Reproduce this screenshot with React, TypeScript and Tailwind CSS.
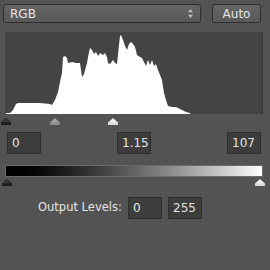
const histogram: [number, number][] = [
  [6, 113], [10, 113], [13, 110], [16, 104], [18, 103], [30, 103], [40, 103], [50, 104],
  [52, 105], [55, 100], [58, 92], [60, 82], [62, 73], [63, 57], [65, 56], [67, 58],
  [68, 63], [72, 62], [76, 63], [80, 63], [82, 77], [84, 74], [87, 63], [89, 52],
  [90, 48], [92, 50], [94, 54], [96, 52], [98, 56], [100, 53], [103, 55], [105, 53],
  [107, 57], [108, 63], [110, 64], [113, 60], [115, 63], [117, 64], [119, 45], [120, 36],
  [121, 35], [123, 40], [125, 46], [127, 50], [129, 44], [131, 42], [133, 44], [135, 47],
  [137, 55], [140, 57], [142, 58], [144, 62], [146, 66], [148, 60], [150, 65], [152, 60],
  [154, 66], [156, 64], [158, 70], [160, 75], [162, 80], [164, 93], [166, 100], [168, 106],
  [172, 107], [176, 107], [178, 108], [182, 110], [186, 112], [190, 113],
]

// page coords -> local coords of the histogram box (starts at 5,32)
const points = [...histogram, [190, 114], [6, 114]]
  .map(([x, y]) => `${x - 5},${y - 32}`)
  .join(' ')

function Handle({ tone }: { tone: 'black' | 'gray' | 'white' }) {
  const fill = tone === 'black' ? '#1c1c1c' : tone === 'gray' ? '#8c8c8c' : '#dcdcdc'
  const top = tone === 'black' ? '#3a3a3a' : tone === 'gray' ? '#a6a6a6' : '#f2f2f2'
  return (
    <svg width="10" height="7" viewBox="0 0 10 7" className="block">
      <polygon points="5,0 10,4.5 10,7 0,7 0,4.5" fill={fill} />
      <polygon points="5,0.8 9,4.3 1,4.3" fill={top} />
    </svg>
  )
}

function Field({ value, className = '' }: { value: string; className?: string }) {
  return (
    <div
      className={`w-[34px] h-[22px] bg-[#3d3d3d] border border-[#2f2f2f] flex items-center pl-[4px] text-[12px] text-[#e4e4e4] ${className}`}
    >
      {value}
    </div>
  )
}

export default function App() {
  return (
    <div
      className="w-[270px] h-[270px] bg-[#535353] overflow-hidden text-[#e4e4e4]"
      style={{ fontFamily: '"DejaVu Sans", "Open Sans", sans-serif' }}
    >
      <div className="flex items-center pt-[4px] pl-[3px] pr-[9px]">
        <div className="w-[198px] h-[19px] rounded-[3px] border border-[#2e2e2e] bg-gradient-to-b from-[#646464] to-[#585858] flex items-center justify-between pl-[6px] pr-[7px]">
          <span className="text-[12px] leading-none">RGB</span>
          <svg width="5" height="9" viewBox="0 0 5 9">
            <polygon points="2.5,0 5,3.2 0,3.2" fill="#bdbdbd" />
            <polygon points="0,5.8 5,5.8 2.5,9" fill="#bdbdbd" />
          </svg>
        </div>
        <div className="ml-auto w-[49px] h-[19px] rounded-[3px] border border-[#2e2e2e] bg-gradient-to-b from-[#656565] to-[#595959] flex items-center justify-center text-[12px] leading-none">
          Auto
        </div>
      </div>

      <div className="mt-[9px] ml-[5px] w-[258px] h-[82px] bg-[#444444] border-r-2 border-[#3c3c3c]">
        <svg width="258" height="82" viewBox="0 0 258 82" className="block">
          <polygon points={points} fill="#ffffff" />
        </svg>
      </div>

      <div className="relative ml-[5px] w-[258px] h-[10px]">
        <div className="absolute left-[-4px] top-[4px]"><Handle tone="black" /></div>
        <div className="absolute left-[45px] top-[4px]"><Handle tone="gray" /></div>
        <div className="absolute left-[103px] top-[4px]"><Handle tone="white" /></div>
      </div>

      <div className="flex justify-between mt-[8px] pl-[7px] pr-[9px]">
        <Field value="0" />
        <Field value="1.15" />
        <Field value="107" />
      </div>

      <div className="mt-[11px] ml-[5px] w-[258px] h-[12px] border border-[#6a6a6a] bg-gradient-to-r from-black to-white" />

      <div className="relative ml-[5px] w-[258px] h-[10px]">
        <div className="absolute left-[-3px] top-[2px]"><Handle tone="black" /></div>
        <div className="absolute left-[250px] top-[2px]"><Handle tone="white" /></div>
      </div>

      <div className="flex items-center mt-[10px] pl-[38px]">
        <span className="text-[11.5px] w-[90px]">Output Levels:</span>
        <Field value="0" />
        <Field value="255" className="ml-[6px]" />
      </div>
    </div>
  )
}
